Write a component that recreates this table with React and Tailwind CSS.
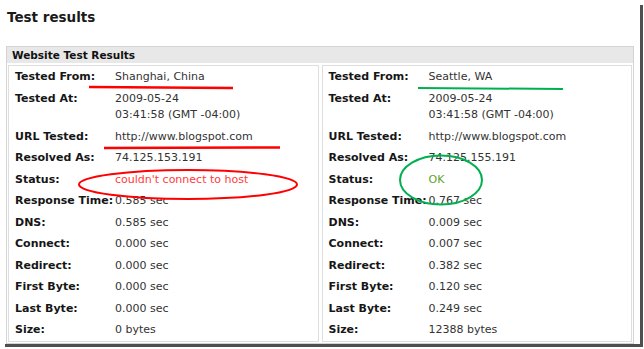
import React from "react";

const left = [
  ["Tested From:", ["Shanghai, China"]],
  ["Tested At:", ["2009-05-24", "03:41:58 (GMT -04:00)"]],
  ["URL Tested:", ["http://www.blogspot.com"]],
  ["Resolved As:", ["74.125.153.191"]],
  ["Status:", ["couldn't connect to host"], "text-[#ff3b3b]"],
  ["Response Time:", ["0.585 sec"]],
  ["DNS:", ["0.585 sec"]],
  ["Connect:", ["0.000 sec"]],
  ["Redirect:", ["0.000 sec"]],
  ["First Byte:", ["0.000 sec"]],
  ["Last Byte:", ["0.000 sec"]],
  ["Size:", ["0 bytes"]],
];

const right = [
  ["Tested From:", ["Seattle, WA"]],
  ["Tested At:", ["2009-05-24", "03:41:58 (GMT -04:00)"]],
  ["URL Tested:", ["http://www.blogspot.com"]],
  ["Resolved As:", ["74.125.155.191"]],
  ["Status:", ["OK"], "text-[#5fa32b]"],
  ["Response Time:", ["0.767 sec"]],
  ["DNS:", ["0.009 sec"]],
  ["Connect:", ["0.007 sec"]],
  ["Redirect:", ["0.382 sec"]],
  ["First Byte:", ["0.120 sec"]],
  ["Last Byte:", ["0.249 sec"]],
  ["Size:", ["12388 bytes"]],
];

const ResultBox = ({ rows }) => {
  return (
    <div className="border border-[#dedede] pl-[6px]">
      {rows.map(([label, lines, color]) => (
        <div key={label} className="flex pt-[3px] pb-[2px] text-[11px] leading-[16.5px]">
          <div className="w-[100px] shrink-0 font-bold text-[#161616]">{label}</div>
          <div className={color || "text-[#333]"}>
            {lines.map((l) => (
              <div key={l} className="whitespace-nowrap">{l}</div>
            ))}
          </div>
        </div>
      ))}
    </div>
  );
};

export default function App() {
  return (
    <div className="w-[644px] h-[349px] bg-white">
      <div
        className="relative w-[640px] h-[344px] bg-white shadow-[4px_4px_0_-1px_rgba(60,60,60,0.9)]"
        style={{ fontFamily: '"DejaVu Sans", Verdana, sans-serif' }}
      >
        <h1 className="pl-[7px] pt-[7px] text-[13.5px] leading-[20px] font-bold text-[#1a1a1a]">
          Test results
        </h1>
        <div className="ml-[6px] mt-[19px] w-[628px] border border-[#d4d4d4]">
          <div className="h-[16px] bg-[#e8e8e8] px-[5px] text-[10.5px] leading-[16px] font-bold text-[#111]">
            Website Test Results
          </div>
          <div className="grid grid-cols-2 gap-[3px] px-[1px] pt-[2px] pb-[1px]">
            <ResultBox rows={left} />
            <ResultBox rows={right} />
          </div>
        </div>

        <svg
          className="absolute left-0 top-0 pointer-events-none"
          width="640"
          height="344"
          viewBox="0 0 640 344"
        >
          <line x1="89" y1="87" x2="233" y2="88" stroke="#ff0000" strokeWidth="2.5" />
          <line x1="104" y1="148" x2="280" y2="147.5" stroke="#ff0000" strokeWidth="2.5" />
          <ellipse cx="188" cy="184.5" rx="109" ry="14.5" fill="none" stroke="#ff0000" strokeWidth="2" />
          <line x1="418" y1="88" x2="563" y2="89" stroke="#00b050" strokeWidth="2" />
          <ellipse cx="441" cy="180" rx="41" ry="24.5" fill="none" stroke="#00b050" strokeWidth="2" />
        </svg>
      </div>
    </div>
  );
}
